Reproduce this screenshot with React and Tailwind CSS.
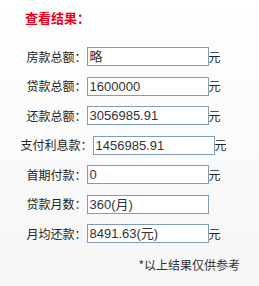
import React from 'react';

const rows = [
  { label: '房款总额：', value: '略', unit: true },
  { label: '贷款总额：', value: '1600000', unit: true },
  { label: '还款总额：', value: '3056985.91', unit: true },
  { label: '支付利息款：', value: '1456985.91', unit: true },
  { label: '首期付款：', value: '0', unit: true },
  { label: '贷款月数：', value: '360(月)', unit: false },
  { label: '月均还款：', value: '8491.63(元)', unit: true },
];

export default function App() {
  return (
    <div
      className="w-[259px] h-[286px] bg-gradient-to-b from-white to-[#f6f6f6] relative overflow-hidden"
      style={{ fontFamily: '"Noto Sans CJK SC", "Liberation Sans", sans-serif' }}
    >
      <div className="pl-[25px] pt-[9px] text-[13px] leading-[18px] font-bold text-[#e8001c]">
        查看结果：
      </div>

      <div className="w-[247px] mt-[20px] flex flex-col items-center gap-[10.5px]">
        {rows.map((r) => (
          <div key={r.label} className="flex items-center h-[19px]">
            <span className="text-[12px] text-[#222] leading-none">{r.label}</span>
            <div
              className="w-[122px] h-[19px] border border-[#7f9db9] bg-white flex items-center px-[2px] text-[#333]"
              style={{ fontFamily: '"Liberation Sans", "Noto Sans CJK SC", sans-serif' }}
            >
              <span className="text-[13px] leading-none">{r.value}</span>
            </div>
            <span className={`text-[12px] leading-none text-[#222] ${r.unit ? '' : 'invisible'}`}>元</span>
          </div>
        ))}
      </div>

      <div className="mt-[16px] pr-[19px] text-right text-[12px] text-[#333] leading-none">
        *以上结果仅供参考
      </div>
    </div>
  );
}
